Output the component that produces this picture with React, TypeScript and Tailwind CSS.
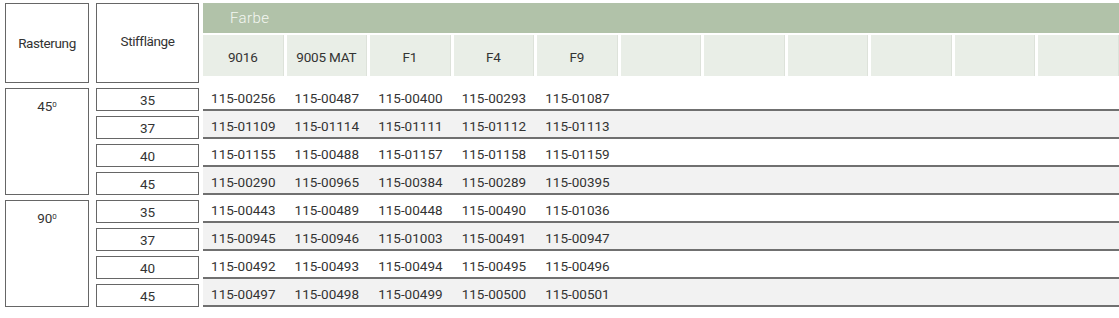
import React, { FC } from 'react'

const colors = ['9016', '9005 MAT', 'F1', 'F4', 'F9', '', '', '', '', '', '']

type Row = { len: string; codes: string[] }

const groups: { angle: string; rows: Row[] }[] = [
  {
    angle: '45',
    rows: [
      { len: '35', codes: ['115-00256', '115-00487', '115-00400', '115-00293', '115-01087'] },
      { len: '37', codes: ['115-01109', '115-01114', '115-01111', '115-01112', '115-01113'] },
      { len: '40', codes: ['115-01155', '115-00488', '115-01157', '115-01158', '115-01159'] },
      { len: '45', codes: ['115-00290', '115-00965', '115-00384', '115-00289', '115-00395'] },
    ],
  },
  {
    angle: '90',
    rows: [
      { len: '35', codes: ['115-00443', '115-00489', '115-00448', '115-00490', '115-01036'] },
      { len: '37', codes: ['115-00945', '115-00946', '115-01003', '115-00491', '115-00947'] },
      { len: '40', codes: ['115-00492', '115-00493', '115-00494', '115-00495', '115-00496'] },
      { len: '45', codes: ['115-00497', '115-00498', '115-00499', '115-00500', '115-00501'] },
    ],
  },
]

const App: FC = () => {
  const rows = groups.flatMap((g) => g.rows)

  return (
    <div
      className="w-[1119px] h-[318px] bg-white text-[13.5px] text-[#333] flex pt-[3px] pl-[5px] overflow-hidden"
      style={{ fontFamily: 'Roboto, "Liberation Sans", Arial, sans-serif' }}
    >
      {/* Rasterung column */}
      <div className="w-[84px] flex flex-col shrink-0">
        <div className="h-[80px] border border-[#666] flex items-center justify-center tracking-[-0.4px]">
          Rasterung
        </div>
        {groups.map((g) => (
          <div
            key={g.angle}
            className="mt-[5px] h-[107px] border border-[#666] flex justify-center pt-[10px] leading-[15px]"
          >
            <span>
              {g.angle}
              <sup className="text-[8px]">0</sup>
            </span>
          </div>
        ))}
      </div>

      <div className="ml-[7px] flex-1 flex flex-col">
        {/* header */}
        <div className="flex h-[80px]">
          <div className="w-[103px] shrink-0 border border-[#666] flex items-center justify-center tracking-[-0.4px] pb-[4px]">
            Stifflänge
          </div>
          <div className="ml-[4px] flex-1 flex flex-col">
            <div className="h-[30px] bg-[#b1c2a9] text-[#f4f7f2] text-[15px] font-light pl-[27px] flex items-center tracking-[0.4px]">
              Farbe
            </div>
            <div className="mt-[2px] h-[41px] grid grid-cols-11 gap-[3px]">
              {colors.map((c, i) => (
                <div
                  key={i}
                  className="bg-[#e9eee7] border-r border-[#dde2da] flex items-center justify-center pt-[3px] tracking-[-0.2px]"
                >
                  {c}
                </div>
              ))}
            </div>
          </div>
        </div>

        {/* data rows */}
        {rows.map((r, i) => (
          <div key={i} className="flex h-[28px]">
            <div className="w-[103px] shrink-0 pt-[5px]">
              <div className="h-[23px] border border-[#666] flex items-center justify-center pt-[1px]">
                {r.len}
              </div>
            </div>
            <div
              className={`ml-[4px] flex-1 border-b-2 border-[#707070] grid grid-cols-11 gap-[3px] pt-[8px] leading-[15px] ${
                i % 2 === 1 ? 'bg-[#f2f2f2]' : 'bg-white'
              }`}
            >
              {colors.map((_, j) => (
                <div key={j} className="text-center">
                  {r.codes[j] ?? ''}
                </div>
              ))}
            </div>
          </div>
        ))}
      </div>
    </div>
  )
}

export default App
